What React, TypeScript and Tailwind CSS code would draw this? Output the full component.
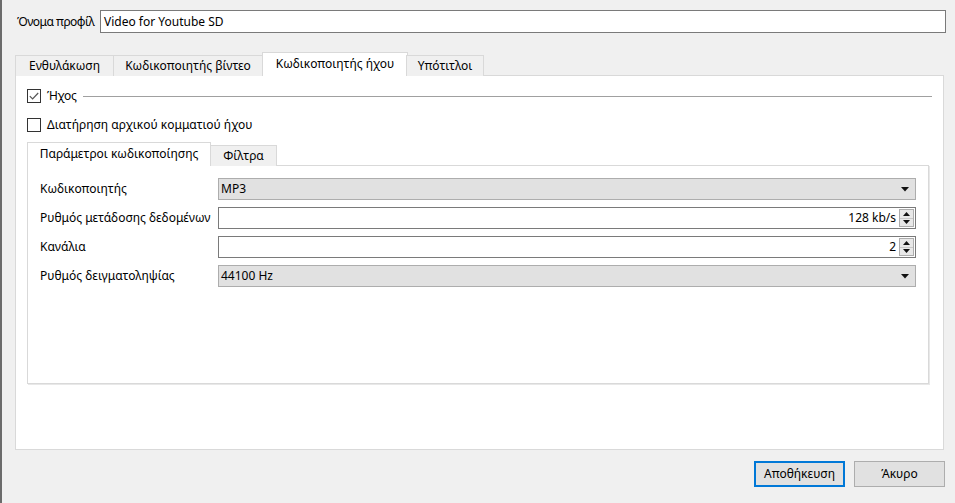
import React from "react"

const font = { fontFamily: '"Noto Sans", "Open Sans", sans-serif' }

function Checkbox({ checked }: { checked?: boolean }) {
  return (
    <span className="w-[14px] h-[14px] border border-[#333333] bg-white flex items-center justify-center shrink-0">
      {checked && (
        <svg width="10" height="8" viewBox="0 0 10 8">
          <path d="M0.8 4.2 L3.6 7 L9.2 1" fill="none" stroke="#555" strokeWidth="1.2" />
        </svg>
      )}
    </span>
  )
}

function DownArrow() {
  return (
    <svg width="8" height="5" viewBox="0 0 8 5">
      <path d="M0 0 H8 L4 4.5 Z" fill="#111" />
    </svg>
  )
}

function Combo({ value }: { value: string }) {
  return (
    <div className="h-[22px] flex-1 border border-[#adadad] bg-[#e1e1e1] flex items-center pl-[2px] pr-[6px]">
      <span className="flex-1">{value}</span>
      <DownArrow />
    </div>
  )
}

function Spin({ value }: { value: string }) {
  return (
    <div className="h-[22px] flex-1 border border-[#7a7a7a] bg-white flex items-center pr-[1px]">
      <span className="flex-1 text-right pr-[3px]">{value}</span>
      <div className="w-[15px] h-[18px] border border-[#adadad] bg-[#e8e8e8] flex flex-col">
        <div className="flex-1 flex items-center justify-center border-b border-[#c8c8c8]">
          <svg width="7" height="4" viewBox="0 0 7 4">
            <path d="M0 4 H7 L3.5 0 Z" fill="#111" />
          </svg>
        </div>
        <div className="flex-1 flex items-center justify-center">
          <svg width="7" height="4" viewBox="0 0 7 4">
            <path d="M0 0 H7 L3.5 4 Z" fill="#111" />
          </svg>
        </div>
      </div>
    </div>
  )
}

function Row({ label, children }: { label: string; children: React.ReactNode }) {
  return (
    <div className="flex items-center h-[22px]">
      <span className="w-[190px] pl-[12px] shrink-0 whitespace-nowrap">{label}</span>
      {children}
    </div>
  )
}

const outerTabs = [
  { name: "Ενθυλάκωση", w: "w-[99px]" },
  { name: "Κωδικοποιητής βίντεο", w: "w-[150px]" },
  { name: "Κωδικοποιητής ήχου", w: "w-[146px]", active: true },
  { name: "Υπότιτλοι", w: "w-[78px]" },
]

export default function App() {
  return (
    <div
      className="w-[955px] h-[503px] bg-[#f0f0f0] border-l-2 border-[#6b6b6b] text-[12px] text-black flex flex-col overflow-hidden whitespace-nowrap"
      style={font}
    >
      <div className="flex items-center pt-[10px] pl-[15px] pr-[9px]">
        <span className="w-[83px] shrink-0 tracking-[-0.5px]">Όνομα προφίλ</span>
        <div className="flex-1 h-[23px] border border-[#7a7a7a] bg-white flex items-center pl-[3px]">
          Video for Youtube SD
        </div>
      </div>

      <div className="flex items-end mt-[19px] pl-[13px] h-[24px] relative z-10">
        {outerTabs.map((t) =>
          t.active ? (
            <div
              key={t.name}
              className={`${t.w} h-[24px] bg-white border border-b-0 border-[#d9d9d9] flex items-center justify-center -mx-[1px] pb-[1px]`}
            >
              {t.name}
            </div>
          ) : (
            <div
              key={t.name}
              className={`${t.w} h-[21px] bg-[#f0f0f0] border border-b-0 border-[#d9d9d9] flex items-center justify-center -ml-[1px] first:ml-0`}
            >
              {t.name}
            </div>
          )
        )}
      </div>

      <div className="ml-[13px] mr-[11px] -mt-[1px] h-[375px] bg-white border border-[#d9d9d9] flex flex-col pt-[13px] px-[11px]">
        <div className="flex items-center gap-[6px] h-[14px]">
          <Checkbox checked />
          <span className="tracking-[-0.3px]">Ήχος</span>
          <div className="flex-1 h-px bg-[#a0a0a0] mt-[1px]" />
        </div>
        <div className="flex items-center gap-[6px] mt-[15px] h-[14px]">
          <Checkbox />
          <span>Διατήρηση αρχικού κομματιού ήχου</span>
        </div>

        <div className="flex items-end mt-[10px] h-[24px] relative z-10 mr-[3px]">
          <div className="w-[184px] h-[24px] bg-white border border-b-0 border-[#d9d9d9] flex items-center justify-center pb-[1px]">
            Παράμετροι κωδικοποίησης
          </div>
          <div className="w-[66px] h-[21px] bg-[#f0f0f0] border border-b-0 border-l-0 border-[#d9d9d9] flex items-center justify-center">
            Φίλτρα
          </div>
        </div>
        <div className="-mt-[1px] h-[219px] mr-[3px] bg-white border border-[#d9d9d9] shadow-[1px_1px_0_#e8e8e8] flex flex-col gap-[7px] pt-[12px] pr-[12px]">
          <Row label="Κωδικοποιητής">
            <Combo value="MP3" />
          </Row>
          <Row label="Ρυθμός μετάδοσης δεδομένων">
            <Spin value="128 kb/s" />
          </Row>
          <Row label="Κανάλια">
            <Spin value="2" />
          </Row>
          <Row label="Ρυθμός δειγματοληψίας">
            <Combo value="44100 Hz" />
          </Row>
        </div>
      </div>

      <div className="flex justify-end gap-[9px] mt-[11px] pr-[10px]">
        <button className="w-[91px] h-[26px] border-2 border-[#0078d7] bg-[#e1e1e1] flex items-center justify-center">
          Αποθήκευση
        </button>
        <button className="w-[91px] h-[26px] border border-[#adadad] bg-[#e1e1e1] flex items-center justify-center">
          Άκυρο
        </button>
      </div>
    </div>
  )
}
